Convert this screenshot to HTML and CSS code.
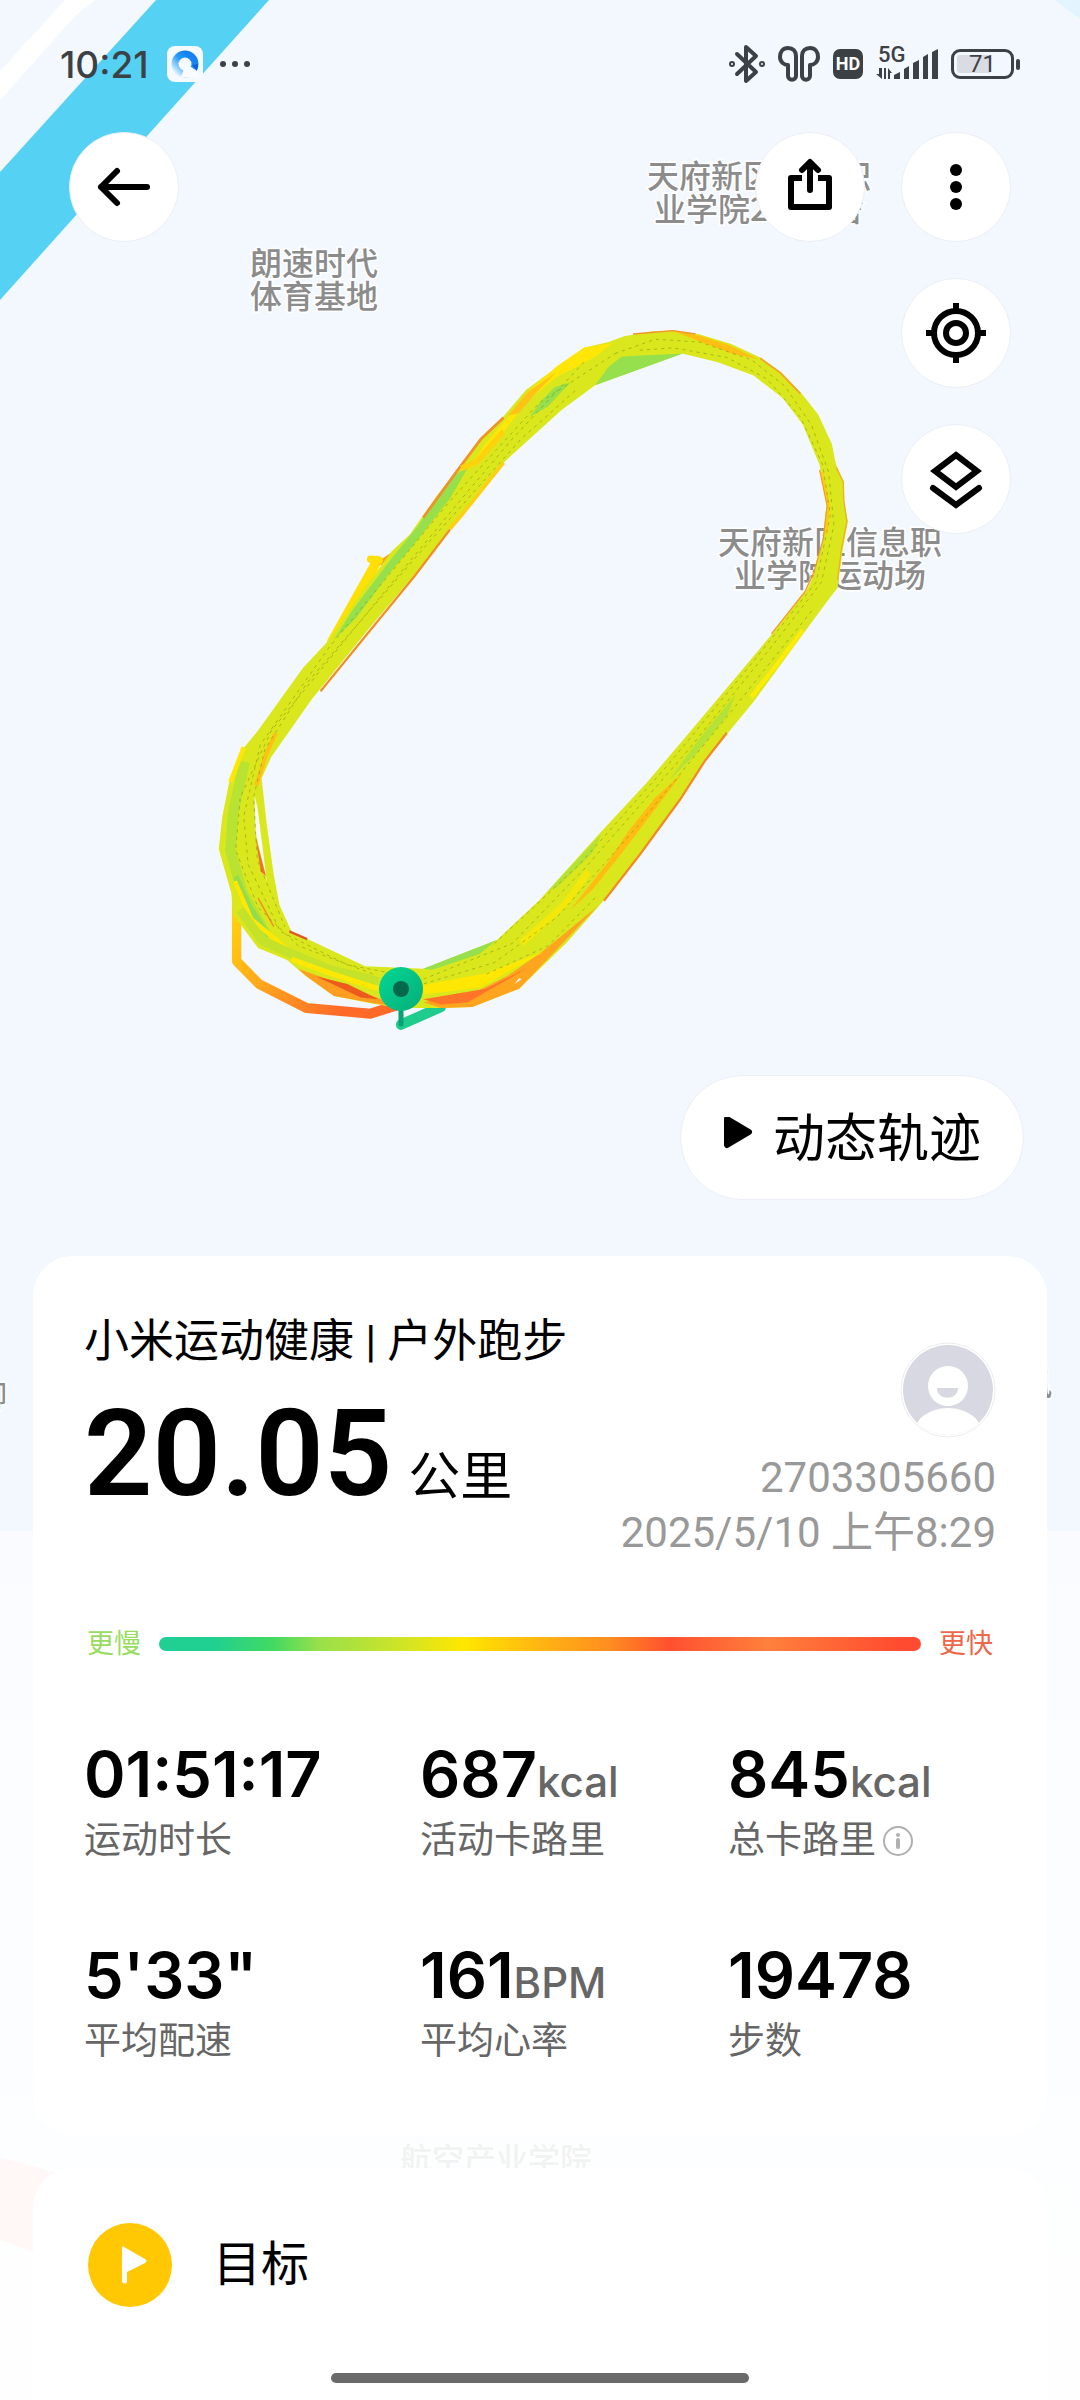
FILE: index.html
```html
<!DOCTYPE html>
<html lang="zh-CN">
<head>
    <meta charset="UTF-8">
    <meta name="viewport" content="width=device-width, initial-scale=1.0">
    <title>户外跑步</title>
    <link rel="stylesheet" href="styles.css">
</head>
<body>
    <svg class="map" viewBox="0 0 1080 2400" aria-hidden="true">
        <defs>
            <linearGradient id="fade" x1="0" y1="0" x2="0" y2="1">
                <stop offset="0" stop-color="#f9fbff"/>
                <stop offset="0.5" stop-color="#fcfdff"/>
                <stop offset="1" stop-color="#fdfefe"/>
            </linearGradient>
            <linearGradient id="lost" x1="0" y1="0" x2="1" y2="0.6">
                <stop offset="0" stop-color="#ffd80a"/>
                <stop offset="0.4" stop-color="#ffab1a"/>
                <stop offset="0.9" stop-color="#ff6a28"/>
            </linearGradient>
            <linearGradient id="pin" x1="0" y1="0" x2="1" y2="1">
                <stop offset="0" stop-color="#04d894"/>
                <stop offset="1" stop-color="#05ad78"/>
            </linearGradient>
        </defs>
        <rect width="1080" height="1531" fill="#f3f8ff"/>
        <rect y="1531" width="1080" height="720" fill="url(#fade)"/>
        <path d="M65 0 L95 0 L75 16 L0 100 L0 71 Z" fill="#ffffff"/>
        <path d="M156 0 L269 0 L0 300 L0 172 Z" fill="#55d1f4"/>
        <path d="M1055 0 H1080 V19 Z" fill="#e3f4ff"/>
        <path d="M0 2158 L33 2166 L60 2174 L33 2252 L0 2240 Z" fill="#fff8f7"/>

        <g class="place">
            <text x="314" y="275">朗速时代</text>
            <text x="314" y="308">体育基地</text>
            <text x="759" y="188">天府新区信息职</text>
            <text x="759" y="221">业学院2号宿舍</text>
            <text x="830" y="554">天府新区信息职</text>
            <text x="830" y="587">业学院运动场</text>
            <text x="-9" y="1407">聊</text>
            <text x="1036" y="1395">风</text>
            <text class="place-faded" x="496" y="2171">航空产业学院</text>
        </g>

        <!-- run track -->
        <svg x="200" y="300" width="700" height="750" viewBox="0 0 1568 1568" preserveAspectRatio="none" fill="none" stroke-linejoin="round">
            <path d="M450 1515 L540 1478" stroke="#1fcc8e" stroke-width="22" stroke-linecap="round"/>
            <path d="M82 1250 V1382 L132 1430 L238 1480 L382 1492 L450 1472" stroke="url(#lost)" stroke-width="21"/>
            <path d="M295 715 L397 545" stroke="#ffe004" stroke-width="21" stroke-linecap="round"/>
            <path d="M400 546 L412 547 L450 522" stroke="#fba51c" stroke-width="14"/>
            <path d="M382 542 L402 544" stroke="#ffe004" stroke-width="16" stroke-linecap="round"/>
            <path fill="#dbe71d" fill-rule="evenodd" d="M860 100 L915 88 L950 76 L1010 66 L1060 64 L1120 72 L1190 92 L1255 120 L1300 150 L1350 198 L1385 240 L1415 300 L1425 345 L1442 380 L1443 420 L1451 463 L1440 520 L1428 602 L1405 630 L1330 725 L1240 840 L1130 965 L1080 1040 L1000 1140 L905 1255 L820 1345 L715 1440 L610 1478 L540 1480 L450 1480 L390 1472 L300 1455 L235 1412 L195 1380 L130 1355 L75 1285 L70 1240 L42 1148 L50 1080 L65 1010 L95 940 L130 900 L230 770 L290 710 L370 600 L430 525 L470 490 L530 410 L580 350 L628 288 L680 243 L730 188 L800 140 Z
                M885 178 L1080 112 L1160 130 L1240 158 L1305 205 L1350 260 L1388 345 L1403 430 L1395 500 L1375 575 L1360 605 L1280 700 L1190 800 L1100 900 L1000 1010 L900 1110 L760 1255 L665 1338 L500 1398 L370 1393 L300 1362 L205 1320 L178 1265 L165 1200 L150 1100 L138 1000 L160 955 L250 835 L380 685 L480 575 L560 480 L680 340 L810 230 Z"/>
            <path d="M122 1035 L129 1062 L150 1218 L125 1115 Z" fill="#f5fbff"/>

            <!-- slower laps -->
            <g fill="#96e04d">
                <path d="M885 178 L1082 112 L945 118 L915 140 Z"/>
                <path d="M830 172 L795 182 L765 210 L738 245 L780 222 Z"/>
                <path d="M600 350 L565 368 L490 470 L425 545 L340 650 L300 710 L350 665 L425 570 L480 510 L560 415 Z"/>
                <path d="M500 1398 L665 1338 L625 1368 L520 1400 Z"/>
            </g>
            <g fill="#b4e236">
                <path d="M1200 825 L1120 915 L1050 1005 L1110 950 L1180 870 Z"/>
                <path d="M900 1115 L850 1165 L780 1235 L800 1228 L880 1155 Z"/>
            </g>
            <path d="M100 965 L75 1070 L68 1150 L95 1240 L150 1330" stroke="#b9e333" stroke-width="24"/>
            <path d="M80 1205 L112 1270 L155 1330" stroke="#93dd4d" stroke-width="12"/>
            <path d="M78 1215 L115 1295 L180 1345 L230 1385" stroke="#ffe704" stroke-width="10"/>
            <path d="M90 1275 L140 1340 L200 1365 L290 1400 L400 1425" stroke="#c4e22a" stroke-width="20"/>

            <!-- faster laps -->
            <path d="M860 100 L925 90 L880 122 L800 160 L740 205 L680 275 L610 340 L640 300 L690 245 L740 187 L800 138 Z" fill="#ffe606"/>
            <path d="M800 150 L735 192 L690 242 L715 236 L755 192 Z" fill="#ffc217"/>
            <path d="M680 246 L630 290 L580 352 L500 455" stroke="#f2902a" stroke-width="6"/>
            <path d="M680 275 L620 338 L585 352" stroke="#ffd20e" stroke-width="12"/>
            <path d="M1060 65 L1120 75 L1190 96 L1250 124 L1195 113 L1120 87 Z" fill="#ffbe14"/>
            <path d="M970 71 L1060 64 L1110 71" stroke="#f09428" stroke-width="3"/>
            <path d="M1255 122 L1300 152 L1345 196" stroke="#efa927" stroke-width="4"/>
            <path d="M1388 355 L1405 430 L1396 500 L1375 570 L1355 610 L1280 698" stroke="#f79b20" stroke-width="3"/>
            <path d="M1393 360 L1409 430 L1402 490" stroke="#ffc90e" stroke-width="5"/>
            <path d="M1425 350 L1441 380 L1442 420 L1449 463 L1437 520 L1428 585" stroke="#f3b021" stroke-width="3"/>
            <path d="M1350 690 L1290 765 L1235 830" stroke="#ffec04" stroke-width="9"/>
            <path d="M1180 905 L1130 965 L1075 1045 L985 1160 L905 1256" stroke="#f28a25" stroke-width="5"/>
            <path d="M1080 990 L1020 1040 L960 1110 L910 1180 L830 1275 L880 1232 L950 1150 Z" fill="#ffbc12"/>
            <path d="M870 1195 L820 1260 L720 1345" stroke="#f3e80a" stroke-width="14"/>
            <path d="M890 1268 L805 1352 L715 1440 L610 1478 L540 1480 L500 1468 L610 1450 L690 1412 L770 1360 Z" fill="#ffa41f"/>
            <path d="M500 1462 L640 1440 L735 1395 L690 1420 L600 1468 L540 1473 Z" fill="#ff7428"/>
            <path d="M500 1452 L630 1437 L770 1362 L640 1408 L500 1432 Z" fill="#ffe704"/>
            <path d="M705 1430 L714 1418 L720 1420 Z" fill="#ffffff"/>
            <path d="M560 480 L480 578 L380 692 L270 818" stroke="#f28f24" stroke-width="5"/>
            <path d="M680 340 L590 445 L560 478" stroke="#ffd010" stroke-width="8"/>
            <path d="M170 905 L148 950 L126 1015" stroke="#ffbf14" stroke-width="9"/>
            <path d="M98 935 L68 1008" stroke="#ffe704" stroke-width="10"/>
            <path d="M124 1120 L148 1205 L136 1195 Z" fill="#f47321"/>
            <path d="M130 1250 L165 1310" stroke="#f3892a" stroke-width="3"/>
            <path d="M200 1320 L240 1336" stroke="#df5a20" stroke-width="5"/>
            <path d="M205 1378 L300 1410 L400 1440" stroke="#ffe704" stroke-width="11"/>
            <path d="M220 1398 L300 1425 L400 1460 L450 1478 L390 1470 L300 1455 L240 1415 Z" fill="#ff9d20"/>
            <path d="M260 1414 L330 1430 L400 1462 L360 1458 Z" fill="#ec5a1e"/>

            <!-- seams between laps -->
            <g stroke="#808f12" stroke-width="2" stroke-dasharray="7 9" opacity="0.6">
                <path d="M930 112 L1020 82 L1120 88 L1235 125 L1310 180 L1370 262 L1408 360 L1420 470 L1392 590 L1280 725 L1090 945 L860 1190 L700 1345 L500 1420 L330 1390 L180 1320 L108 1180 L98 1080 L135 930 L290 725 L560 420 L760 215 Z"/>
                <path d="M985 105 L1060 100 L1180 120 L1270 165 L1345 245 L1395 345 L1412 450 L1380 590 L1240 755 L1050 970 L850 1180 L660 1345"/>
                <path d="M860 130 L700 290 L600 400 L400 625 L160 900 L90 1040 L80 1150 L130 1270 L220 1350 L390 1410"/>
                <path d="M840 190 L720 290 L500 520 L240 800 L145 940 L120 1040 L128 1170 L190 1310"/>
                <path d="M1370 650 L1190 860 L980 1100 L800 1290 L660 1385 L500 1430"/>
                <path d="M885 1250 L780 1350 L640 1410"/>
            </g>
        </svg>
        <path d="M401 1000 V1024" stroke="#09a274" stroke-width="5" stroke-linecap="round"/>
        <circle cx="401" cy="989" r="22" fill="url(#pin)"/>
        <circle cx="401" cy="989" r="8" fill="#056848"/>
    </svg>

    <div class="page">
        <header class="status-bar">
            <span class="clock">10:21</span>
            <svg class="status-app" viewBox="0 0 36 36" width="36" height="36">
                <defs>
                    <linearGradient id="ring" x1="1" y1="0" x2="0" y2="1">
                        <stop offset="0.2" stop-color="#1583f2"/>
                        <stop offset="0.5" stop-color="#259af8"/>
                        <stop offset="0.95" stop-color="#d6f0ff"/>
                    </linearGradient>
                </defs>
                <rect width="36" height="36" rx="8" fill="#f6f9fd"/>
                <circle cx="18" cy="18" r="10" fill="none" stroke="url(#ring)" stroke-width="7"/>
                <path d="M17 23 Q22 18 27 23 Q32 24 31 31 H14 Z" fill="#fafcff"/>
                <path d="M25 19 L31 18 L30 25 Z" fill="#0b63dc"/>
            </svg>
            <svg class="status-dots" viewBox="0 0 32 8" width="32" height="8" fill="#3c4146">
                <circle cx="4" cy="4" r="3"/><circle cx="16" cy="4" r="3"/><circle cx="28" cy="4" r="3"/>
            </svg>
            <div class="status-icons">
                <svg viewBox="0 0 36 40" width="36" height="40" fill="none" stroke="#3c4146" stroke-width="4" stroke-linejoin="round" stroke-linecap="round">
                    <path d="M8 10 L27 28 L17 37 V3 L27 12 L8 30"/>
                    <circle cx="3" cy="20" r="1"/><circle cx="33" cy="20" r="1"/>
                </svg>
                <svg viewBox="0 0 42 36" width="42" height="36" fill="none" stroke="#3c4146" stroke-width="4" stroke-linejoin="round">
                    <path d="M18 10 C18 5 15 2 10 2 C5 2 2 6 2 11 C2 16 6 19 10 19 V30 C10 35 18 35 18 30 Z"/>
                    <path d="M24 10 C24 5 27 2 32 2 C37 2 40 6 40 11 C40 16 36 19 32 19 V30 C32 35 24 35 24 30 Z"/>
                </svg>
                <span class="hd">HD</span>
                <span class="network">
                    <span class="network-type">5G</span>
                    <svg viewBox="0 0 62 30" width="62" height="30" fill="#3c4146">
                        <path d="M3 19 H6 V30 L0 25 H3 Z M8 19 H10 V30 H8 Z M12 19 L16 24 H14 V30 H12 Z"/>
                        <path d="M18 26 L24 23 V30 H18 Z M28 20 L33 17 V30 H28 Z M37 14 L43 11 V30 H37 Z M47 8 L52 5 V30 H47 Z M56 3 L62 0 V30 H56 Z"/>
                    </svg>
                </span>
                <span class="battery"><span class="battery-body">71</span><span class="battery-tip"></span></span>
            </div>
        </header>

        <main class="content">
            <section class="stage">
                <div class="toolbar">
                    <button class="round" type="button" aria-label="返回">
                        <svg viewBox="0 0 60 60" width="60" height="60" fill="none" stroke="#000" stroke-width="6" stroke-linecap="round" stroke-linejoin="round">
                            <path d="M53 30 H7 M23 14 L7 30 L23 46"/>
                        </svg>
                    </button>
                    <button class="round push" type="button" aria-label="分享">
                        <svg viewBox="0 0 60 60" width="60" height="60" fill="none" stroke="#000" stroke-width="6" stroke-linejoin="round">
                            <path d="M22 21 H11 V50 H49 V21 H38"/>
                            <path d="M30 33 V6 M22 13 L30 5 L38 13" stroke-linecap="round"/>
                        </svg>
                    </button>
                    <button class="round" type="button" aria-label="更多">
                        <svg viewBox="0 0 60 60" width="60" height="60">
                            <circle cx="30" cy="13" r="6"/><circle cx="30" cy="30" r="6"/><circle cx="30" cy="47" r="6"/>
                        </svg>
                    </button>
                </div>
                <div class="map-tools">
                    <button class="round" type="button" aria-label="定位">
                        <svg viewBox="0 0 60 60" width="60" height="60" fill="none" stroke="#000" stroke-width="6">
                            <circle cx="30" cy="30" r="22"/><circle cx="30" cy="30" r="10"/>
                            <path d="M30 0 V8 M30 52 V60 M0 30 H8 M52 30 H60"/>
                        </svg>
                    </button>
                    <button class="round" type="button" aria-label="图层">
                        <svg viewBox="0 0 60 60" width="60" height="60" fill="none" stroke="#000" stroke-width="6">
                            <path d="M30 6 L51 22 L30 38 L9 22 Z"/>
                            <path d="M7 39 L30 56 L53 39" stroke-linecap="round"/>
                        </svg>
                    </button>
                </div>
                <button class="play" type="button">
                    <svg viewBox="0 0 30 46" width="30" height="46">
                        <path d="M4 2 L26 15 L4 28 Z" stroke="#000" stroke-width="6" stroke-linejoin="round"/>
                    </svg>
                    动态轨迹
                </button>
            </section>

            <section class="card summary">
                <div class="head">
                    <div>
                        <h1>小米运动健康 | 户外跑步</h1>
                        <p class="distance">20.05<span>公里</span></p>
                    </div>
                    <div class="user">
                        <svg viewBox="0 0 96 96" width="96" height="96">
                            <defs><clipPath id="face"><circle cx="48" cy="48" r="45"/></clipPath></defs>
                            <circle cx="48" cy="48" r="47" fill="#fff" stroke="#ededf0"/>
                            <g clip-path="url(#face)">
                                <rect width="96" height="96" fill="#d7d8e1"/>
                                <circle cx="48" cy="44" r="20" fill="#fff"/>
                                <path d="M37 46 H58 C58 59 37 59 37 46 Z" fill="#d7d8e1"/>
                                <ellipse cx="48" cy="91" rx="34" ry="25" fill="#fff"/>
                            </g>
                        </svg>
                        <p>2703305660</p>
                        <p>2025/5/10 上午8:29</p>
                    </div>
                </div>
                <div class="pace">
                    <span class="slow">更慢</span>
                    <div class="pace-bar"></div>
                    <span class="fast">更快</span>
                </div>
                <dl class="stats">
                    <div><dd>01:51:17</dd><dt>运动时长</dt></div>
                    <div><dd>687<small>kcal</small></dd><dt>活动卡路里</dt></div>
                    <div><dd>845<small>kcal</small></dd><dt>总卡路里
                        <svg viewBox="0 0 32 32" width="32" height="32" fill="none" stroke="#b0b0b0" stroke-width="2">
                            <circle cx="16" cy="16" r="14"/>
                            <path d="M16 15 V22" stroke-width="4" stroke-linecap="round"/>
                            <circle cx="16" cy="10" r="1"/>
                        </svg></dt></div>
                    <div><dd>5'33"</dd><dt>平均配速</dt></div>
                    <div><dd>161<small>BPM</small></dd><dt>平均心率</dt></div>
                    <div><dd>19478</dd><dt>步数</dt></div>
                </dl>
            </section>

            <section class="card goal">
                <svg viewBox="0 0 84 84" width="84" height="84">
                    <circle cx="42" cy="42" r="42" fill="#ffc803"/>
                    <path d="M36 24 L57 36 Q60 38 57 40 L39 49 V59 Q37 62 34 59 V25 Q34 22 36 24 Z" fill="#fff"/>
                </svg>
                <h2>目标</h2>
            </section>
        </main>
    </div>
    <div class="home-bar"></div>
</body>
</html>
```
FILE: styles.css
```css
* {
    box-sizing: border-box;
}
body {
    margin: 0;
    position: relative;
    background-color: #fefefe;
    color: #000;
    font-family: Roboto, "Noto Sans CJK SC", sans-serif;
}
h1, h2, p, dl, dd, dt {
    margin: 0;
    font-weight: normal;
}
svg {
    display: block;
    flex: none;
}
.map {
    position: absolute;
    top: 0;
    left: 0;
    width: 100%;
}
.place text {
    font-family: "Noto Sans CJK SC", sans-serif;
    font-size: 32px;
    font-weight: 500;
    fill: #8c8c8c;
    stroke: #fff;
    stroke-width: 3px;
    paint-order: stroke;
    text-anchor: middle;
}
.place .place-faded {
    fill: #f1f2f2;
}
.page {
    position: relative;
    display: flex;
    flex-direction: column;
    min-height: 100vh;
    overflow: hidden;
}
.status-bar {
    display: flex;
    align-items: center;
    height: 128px;
    padding: 0 60px;
    color: #3c4146;
}
.clock {
    font-family: Inter, sans-serif;
    font-size: 37px;
    font-weight: 500;
}
.status-app {
    margin-left: 18px;
}
.status-dots {
    margin-left: 16px;
}
.status-icons {
    display: flex;
    align-items: center;
    gap: 13px;
    margin-left: auto;
}
.hd {
    width: 30px;
    border-radius: 7px;
    background-color: #3c4146;
    color: #fff;
    font-size: 18px;
    font-weight: bold;
    line-height: 30px;
    text-align: center;
}
.network {
    position: relative;
}
.network-type {
    position: absolute;
    top: -4px;
    left: 2px;
    font-size: 22px;
    font-weight: 500;
    line-height: 20px;
}
.battery {
    display: flex;
    align-items: center;
    gap: 2px;
}
.battery-body {
    width: 63px;
    border: 3px solid #3c4146;
    border-radius: 9px;
    background: linear-gradient(to right, #d9dde3 65%, transparent 65%) content-box;
    padding: 3px;
    font-size: 24px;
    line-height: 18px;
    text-align: center;
}
.battery-tip {
    width: 4px;
    height: 11px;
    border-radius: 2px;
    background-color: #3c4146;
}
.content {
    display: flex;
    flex: 1;
    flex-direction: column;
}
.stage {
    display: flex;
    flex: 1;
    flex-direction: column;
    gap: 36px;
    padding: 4px 69px 0;
}
.toolbar {
    display: flex;
    gap: 36px;
}
.push {
    margin-left: auto;
}
.map-tools {
    display: flex;
    flex-direction: column;
    align-items: flex-end;
    gap: 36px;
}
button {
    border: 1px solid #ebeff5;
    background-color: #fff;
    color: #000;
    font-family: inherit;
    cursor: pointer;
}
.round {
    display: flex;
    align-items: center;
    justify-content: center;
    width: 110px;
    height: 110px;
    padding: 0;
    border-radius: 50%;
}
.play {
    display: flex;
    align-items: center;
    align-self: flex-end;
    gap: 20px;
    margin: auto -13px 56px 0;
    padding: 26px 42px 22px;
    border-radius: 63px;
    font-size: 52px;
    line-height: 75px;
}
.card {
    margin: 0 33px;
    background-color: #fff;
}
.summary {
    padding: 56px 51px 66px;
    border-radius: 40px;
}
.head {
    display: flex;
    justify-content: space-between;
}
h1 {
    font-size: 45px;
    line-height: 60px;
}
.distance {
    display: flex;
    align-items: baseline;
    gap: 16px;
    margin-top: 8px;
    font-size: 120px;
    font-weight: 600;
    line-height: 148px;
}
.distance span {
    font-size: 52px;
    font-weight: normal;
}
.user {
    display: flex;
    flex-direction: column;
    align-items: flex-end;
    padding-top: 30px;
    color: #999;
    font-size: 42px;
    line-height: 55px;
    text-align: right;
}
.user svg {
    margin-bottom: 12px;
}
.pace {
    display: flex;
    align-items: center;
    gap: 18px;
    margin-top: 64px;
    padding: 0 3px;
    font-size: 27px;
    line-height: 40px;
}
.slow {
    color: #98dc62;
}
.fast {
    color: #ee6749;
}
.pace-bar {
    flex: 1;
    height: 14px;
    border-radius: 7px;
    background: linear-gradient(to right, #20cf92 7%, #42da62 15%, #98e04a 21%, #d0e427 32%, #ffe700 40%, #ffb512 50%, #ff8e20 59%, #ff5030 67%, #ff803c 80%, #ff4c30 97%);
}
.stats {
    display: grid;
    grid-template-columns: 84fr 77fr 67fr;
    row-gap: 67px;
    margin-top: 70px;
}
.stats dd {
    font-family: Inter, sans-serif;
    font-size: 63px;
    font-weight: 600;
    line-height: 80px;
    white-space: nowrap;
}
.stats small {
    color: #666;
    font-size: 42px;
    font-weight: 500;
    line-height: 42px;
}
.stats dt {
    display: flex;
    align-items: center;
    gap: 6px;
    color: #666;
    font-size: 37px;
    line-height: 54px;
}
.goal {
    display: flex;
    align-items: center;
    gap: 41px;
    margin-top: 33px;
    padding: 55px 55px 93px;
    border-radius: 40px 40px 0 0;
}
h2 {
    font-size: 48px;
    line-height: 56px;
}
.home-bar {
    position: fixed;
    bottom: 17px;
    left: 50%;
    width: 418px;
    height: 10px;
    margin-left: -209px;
    border-radius: 5px;
    background-color: #6a6a6a;
}
```
